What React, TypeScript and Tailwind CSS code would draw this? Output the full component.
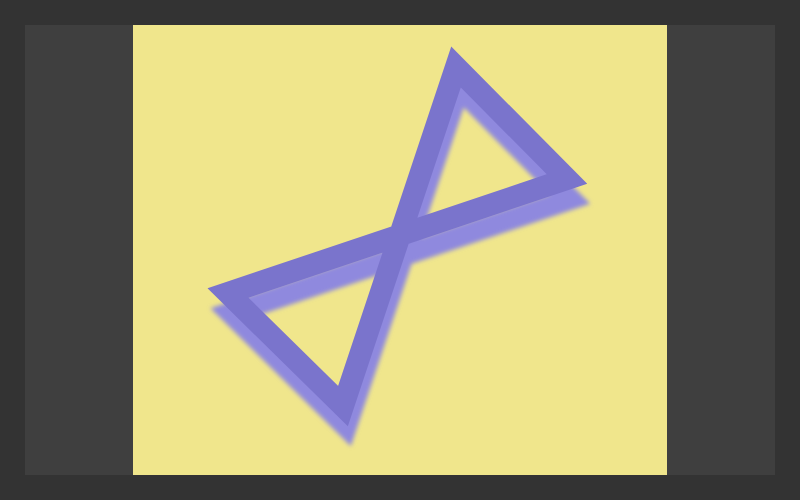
export default function App() {
  return (
    <div className="w-[800px] h-[500px] bg-[#333333] p-[25px]">
      <div className="flex h-full justify-center bg-[#3f3f3f]">
        <div className="h-full w-[534px] bg-[#f0e68c]">
          <svg width="534" height="450" viewBox="0 0 534 450">
            <defs>
              <filter id="soft" x="-20%" y="-20%" width="140%" height="140%">
                <feGaussianBlur stdDeviation="2" />
              </filter>
            </defs>
            {/* shadow */}
            <path
              d="M323 42 L434 154 L95 268 L210 381 Z"
              fill="none"
              stroke="#8f89de"
              strokeWidth="22"
              strokeLinejoin="miter"
              transform="translate(3 20)"
              filter="url(#soft)"
            />
            <path
              d="M323 42 L434 154 L95 268 L210 381 Z"
              fill="none"
              stroke="#7a74cc"
              strokeWidth="22"
              strokeLinejoin="miter"
              filter="url(#soft)"
              style={{ filter: "blur(0.6px)" }}
            />
          </svg>
        </div>
      </div>
    </div>
  );
}
